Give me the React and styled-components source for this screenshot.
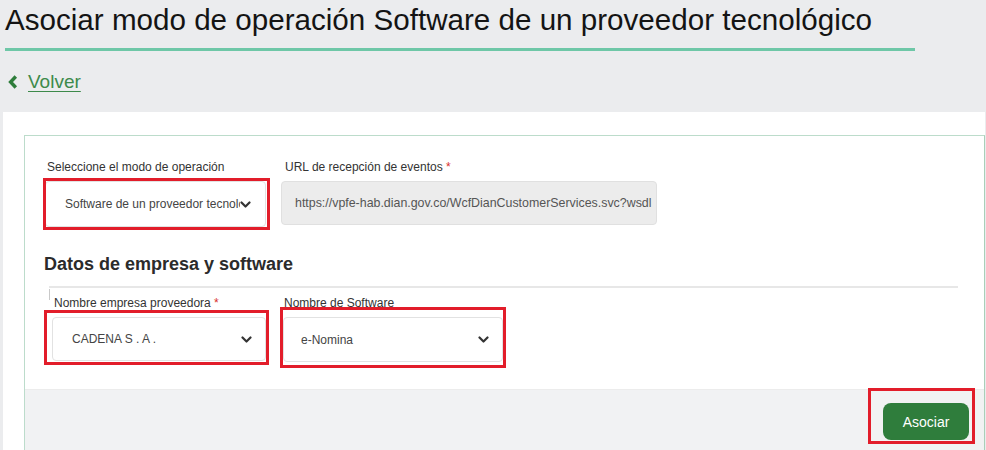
import React from "react";
import styled, { createGlobalStyle } from "styled-components";

const GlobalStyle = createGlobalStyle`
  html, body {
    margin: 0;
    padding: 0;
    background: #ebecee;
    font-family: "Liberation Sans", Arial, sans-serif;
    color: #333;
  }
  * { box-sizing: border-box; }
`;

const Page = styled.div`
  width: 986px;
  height: 450px;
  overflow: hidden;
`;

const TitleBar = styled.h1`
  margin: 0 0 0 5px;
  width: 910px;
  padding-top: 3px;
  height: 51px;
  font-size: 29.6px;
  line-height: 34px;
  font-weight: 400;
  color: #141414;
  white-space: nowrap;
  border-bottom: 3px solid #6ec7a7;
`;

const BackLink = styled.a`
  display: flex;
  align-items: center;
  gap: 10px;
  margin: 19px 0 0 8px;
  height: 24px;
  font-size: 19px;
  color: #3d8a4b;
  text-decoration: underline;
  text-underline-offset: 3px;
  text-decoration-thickness: 1px;
  cursor: pointer;
  width: fit-content;
`;

const Panel = styled.div`
  margin: 18px 1px 0 3px;
  background: #fff;
  padding: 23px 0 0 21px;
  height: 400px;
`;

const Card = styled.div`
  border: 1px solid #bcdccb;
  border-right-color: #a9cfb8;
  background: #fff;
`;

const CardBody = styled.div`
  padding: 24px 25px 27px 20px;
`;

const Row = styled.div`
  display: flex;
  gap: ${(p) => p.$gap}px;
  padding-left: ${(p) => p.$indent || 0}px;
`;

const Field = styled.div`
  position: relative;
  width: ${(p) => p.$width}px;
  display: flex;
  flex-direction: column;
`;

const Label = styled.label`
  font-size: 12px;
  line-height: 14px;
  height: 14px;
  color: #333;
  padding-left: ${(p) => p.$shift || 0}px;
  margin-bottom: 7px;
  white-space: nowrap;
`;

const Required = styled.span`
  color: #d9302c;
`;

const SelectBox = styled.div`
  display: flex;
  align-items: center;
  height: ${(p) => p.$height}px;
  padding: 0 ${(p) => p.$padRight}px 0 ${(p) => p.$pad}px;
  border: 1px solid #e2e2e2;
  border-radius: 4px;
  background: #fff;
  font-size: 12px;
  color: #444;
`;

const SelectText = styled.span`
  flex: 1;
  overflow: hidden;
  white-space: nowrap;
`;

const ReadOnlyInput = styled.div`
  display: flex;
  align-items: center;
  height: 44px;
  padding-left: 13px;
  border: 1px solid #e0e0e0;
  border-radius: 4px;
  background: #ececec;
  font-size: 12.4px;
  color: #555;
  white-space: nowrap;
  overflow: hidden;
`;

const Highlight = styled.div`
  position: absolute;
  top: ${(p) => p.$top}px;
  left: ${(p) => p.$left}px;
  right: ${(p) => p.$right}px;
  bottom: ${(p) => p.$bottom}px;
  border: 3px solid #e21d2a;
  pointer-events: none;
`;

const SectionTitle = styled.h2`
  margin: 26px 0 0 -1px;
  font-size: 18px;
  line-height: 22px;
  font-weight: 700;
  color: #2b2b2b;
`;

const Divider = styled.div`
  position: relative;
  margin: 11px 0 8px 4px;
  width: 909px;
  height: 2px;
  background: #e7e7e7;

  &::after {
    content: "";
    position: absolute;
    left: 0;
    top: 3px;
    width: 1px;
    height: 11px;
    background: #c9c9c9;
  }
`;

const Footer = styled.div`
  display: flex;
  justify-content: flex-end;
  align-items: flex-start;
  height: 62px;
  padding: 13px 15px 0 0;
  background: #f1f2f3;
  border-top: 1px solid #ececec;
`;

const ButtonWrap = styled.div`
  position: relative;
`;

const PrimaryButton = styled.button`
  width: 86px;
  height: 37px;
  border: none;
  border-radius: 8px;
  background: #2f7d3c;
  color: #fff;
  font-family: "Liberation Sans", Arial, sans-serif;
  font-size: 14px;
  cursor: pointer;
`;

function Chevron() {
  return (
    <svg width="11" height="7" viewBox="0 0 11 7">
      <polyline
        points="1.5,1.5 5.5,5.5 9.5,1.5"
        fill="none"
        stroke="#333"
        strokeWidth="2.2"
        strokeLinecap="round"
        strokeLinejoin="round"
      />
    </svg>
  );
}

function BackIcon() {
  return (
    <svg width="10" height="14" viewBox="0 0 10 14">
      <polyline
        points="7.8,1.5 2.6,7 7.8,12.5"
        fill="none"
        stroke="#2e7d3b"
        strokeWidth="3.4"
        strokeLinejoin="miter"
      />
    </svg>
  );
}

function Select({ value, height, pad, padRight = 13 }) {
  return (
    <SelectBox $height={height} $pad={pad} $padRight={padRight}>
      <SelectText>{value}</SelectText>
      <Chevron />
    </SelectBox>
  );
}

export default function App() {
  return (
    <Page>
      <GlobalStyle />
      <TitleBar>Asociar modo de operación Software de un proveedor tecnológico</TitleBar>
      <BackLink>
        <BackIcon />
        Volver
      </BackLink>

      <Panel>
        <Card>
          <CardBody>
            <Row $gap={15}>
              <Field $width={221}>
                <Label $shift={2}>Seleccione el modo de operación</Label>
                <Select value="Software de un proveedor tecnológico" height={46} pad={19} padRight={14} />
                <Highlight $top={18} $left={-2} $right={-4} $bottom={-3} />
              </Field>
              <Field $width={376}>
                <Label $shift={4}>
                  URL de recepción de eventos <Required>*</Required>
                </Label>
                <ReadOnlyInput>https://vpfe-hab.dian.gov.co/WcfDianCustomerServices.svc?wsdl</ReadOnlyInput>
              </Field>
            </Row>

            <SectionTitle>Datos de empresa y software</SectionTitle>
            <Divider />

            <Row $gap={17} $indent={7}>
              <Field $width={214}>
                <Label $shift={2}>
                  Nombre empresa proveedora <Required>*</Required>
                </Label>
                <Select value="CADENA S . A ." height={44} pad={19} />
                <Highlight $top={14} $left={-8} $right={-3} $bottom={-3} />
              </Field>
              <Field $width={220}>
                <Label $shift={1}>Nombre de Software</Label>
                <Select value="e-Nomina" height={45} pad={17} />
                <Highlight $top={11} $left={-3} $right={-3} $bottom={-6} />
              </Field>
            </Row>
          </CardBody>

          <Footer>
            <ButtonWrap>
              <PrimaryButton>Asociar</PrimaryButton>
              <Highlight $top={-15} $left={-15} $right={-6} $bottom={-4} />
            </ButtonWrap>
          </Footer>
        </Card>
      </Panel>
    </Page>
  );
}
